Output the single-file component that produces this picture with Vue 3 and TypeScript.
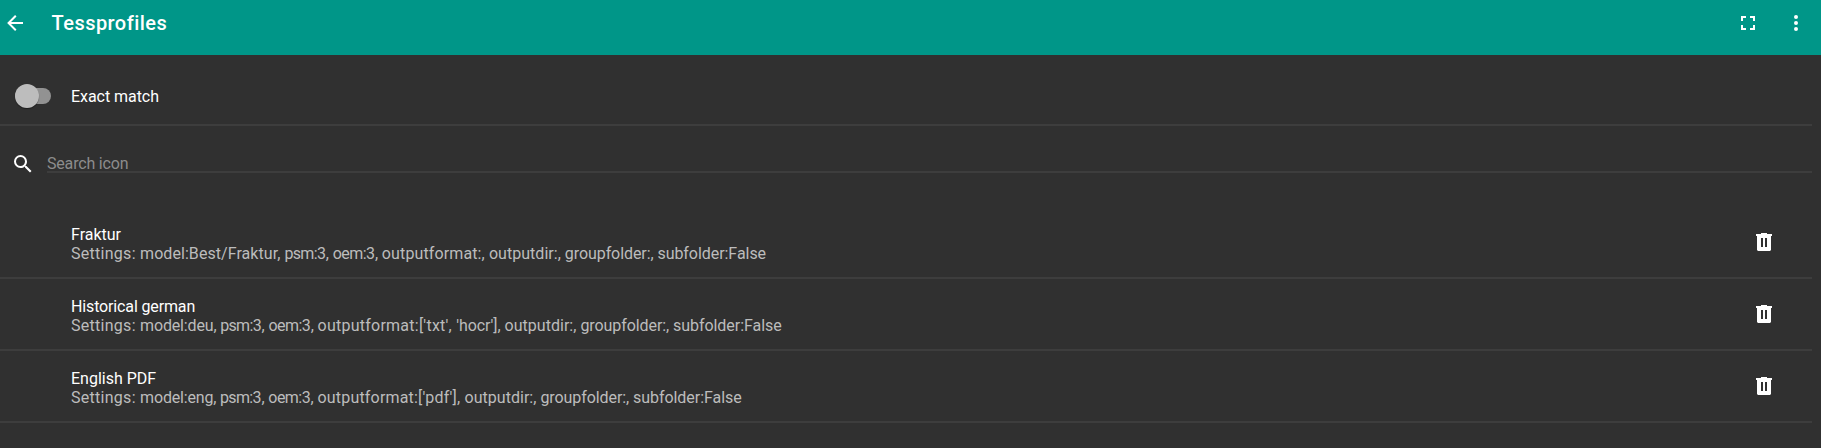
<script setup lang="ts">
interface Chunk {
  text: string
  tracking: number
}

interface Profile {
  name: Chunk
  settings: Chunk[]
}

const chunk = (text: string, tracking = 0): Chunk => ({ text, tracking })

const lead = chunk('Settings: ', 0.28)
const modes = [chunk('psm:', -0.68), chunk('3, ', -0.1), chunk('oem:', -0.55), chunk('3, ', -0.1)]
const tail = [
  chunk('outputdir:, ', 0.03),
  chunk('groupfolder:, ', -0.08),
  chunk('subfolder:False', -0.05),
]

const profiles: Profile[] = [
  {
    name: chunk('Fraktur', 0),
    settings: [lead, chunk('model:Best/Fraktur, ', 0.06), ...modes, chunk('outputformat:, ', 0.12), ...tail],
  },
  {
    name: chunk('Historical german', -0.14),
    settings: [lead, chunk('model:deu, ', -0.16), ...modes, chunk("outputformat:['txt', ", 0.24), chunk("'hocr'], ", -0.05), ...tail],
  },
  {
    name: chunk('English PDF', 0),
    settings: [lead, chunk('model:eng, ', -0.17), ...modes, chunk("outputformat:['pdf'], ", 0.19), ...tail],
  },
]
</script>

<template>
  <div class="screen">
    <header class="toolbar">
      <svg class="icon" viewBox="0 0 24 24"><path d="M20,11V13H8L13.5,18.5L12.08,19.92L4.16,12L12.08,4.08L13.5,5.5L8,11H20Z" /></svg>
      <h1 class="title">Tessprofiles</h1>
      <div class="actions">
        <svg class="icon" viewBox="0 0 24 24"><path d="M5,5H10V7H7V10H5V5M14,5H19V10H17V7H14V5M17,14H19V19H14V17H17V14M10,17V19H5V14H7V17H10Z" /></svg>
        <svg class="icon" viewBox="0 0 24 24"><path d="M12,16A2,2 0 0,1 14,18A2,2 0 0,1 12,20A2,2 0 0,1 10,18A2,2 0 0,1 12,16M12,10A2,2 0 0,1 14,12A2,2 0 0,1 12,14A2,2 0 0,1 10,12A2,2 0 0,1 12,10M12,4A2,2 0 0,1 14,6A2,2 0 0,1 12,8A2,2 0 0,1 10,6A2,2 0 0,1 12,4Z" /></svg>
      </div>
    </header>
    <main class="content">
      <div class="match">
        <span class="switch"><span class="thumb"></span></span>
        <span class="label">Exact match</span>
      </div>
      <div class="search">
        <svg class="icon" viewBox="0 0 24 24"><path d="M9.5,3A6.5,6.5 0 0,1 16,9.5C16,11.11 15.41,12.59 14.44,13.73L14.71,14H15.5L20.5,19L19,20.5L14,15.5V14.71L13.73,14.44C12.59,15.41 11.11,16 9.5,16A6.5,6.5 0 0,1 3,9.5A6.5,6.5 0 0,1 9.5,3M9.5,5C7,5 5,7 5,9.5C5,12 7,14 9.5,14C12,14 14,12 14,9.5C14,7 12,5 9.5,5Z" /></svg>
        <div class="field">Search icon</div>
      </div>
      <ul class="list">
        <li v-for="p in profiles" :key="p.name.text" class="row">
          <div class="texts">
            <div class="name" :style="{ letterSpacing: p.name.tracking + 'px' }">{{ p.name.text }}</div>
            <div class="settings"><span v-for="(c, i) in p.settings" :key="i" :style="{ letterSpacing: c.tracking + 'px' }">{{ c.text }}</span></div>
          </div>
          <svg class="icon" viewBox="0 0 24 24"><path d="M9,3V4H4V6H5V20L6,21H18L19,20V6H20V4H15V3H9M9,8H11V17H9V8M13,8H15V17H13V8Z" /></svg>
        </li>
      </ul>
    </main>
  </div>
</template>

<style>
body {
  margin: 0;
  background: #303030;
}
</style>

<style scoped>
.screen {
  height: 448px;
  overflow: hidden;
  background: #303030;
  color: #fff;
  font-family: Roboto, sans-serif;
  font-size: 16px;
  line-height: 19px;
}
.icon {
  display: block;
  flex: none;
  width: 24px;
  height: 24px;
  fill: #fff;
}
.toolbar {
  box-sizing: border-box;
  display: flex;
  align-items: flex-start;
  height: 55px;
  padding: 11px 13px 0 3px;
  background: #009688;
}
.title {
  margin: 0 0 0 24.5px;
  font-size: 20px;
  font-weight: 500;
  line-height: 24px;
  letter-spacing: 0.46px;
}
.actions {
  display: flex;
  gap: 24px;
  margin-left: auto;
}
.content {
  margin-right: 9px;
}
.match {
  box-sizing: border-box;
  display: flex;
  align-items: flex-start;
  height: 71px;
  padding: 29px 0 0 15px;
  border-bottom: 2px solid #3d3d3d;
}
.switch {
  display: flex;
  align-items: center;
  width: 36px;
  height: 16px;
  margin-top: 4px;
  border-radius: 8px;
  background: #929292;
}
.thumb {
  flex: none;
  width: 24px;
  height: 24px;
  border-radius: 50%;
  background: #bdbdbd;
  box-shadow: 0 1px 1px rgba(0, 0, 0, 0.4);
}
.label {
  margin: 3px 0 0 20px;
  letter-spacing: -0.05px;
}
.search {
  display: flex;
  padding: 26px 0 0 11px;
}
.field {
  box-sizing: border-box;
  flex: 1;
  height: 19px;
  margin-left: 12px;
  margin-top: 2px;
  border-bottom: 2px solid #3d3d3d;
  color: #8c8c8c;
  letter-spacing: -0.18px;
}
.list {
  margin: 31px 0 0;
  padding: 0;
  list-style: none;
}
.row {
  box-sizing: border-box;
  display: flex;
  justify-content: space-between;
  height: 72px;
  padding: 18px 36px 0 71px;
  border-bottom: 2px solid #3d3d3d;
}
.row .icon {
  margin-top: 5px;
}
.settings {
  color: #bcbcbc;
  white-space: pre;
}
</style>
